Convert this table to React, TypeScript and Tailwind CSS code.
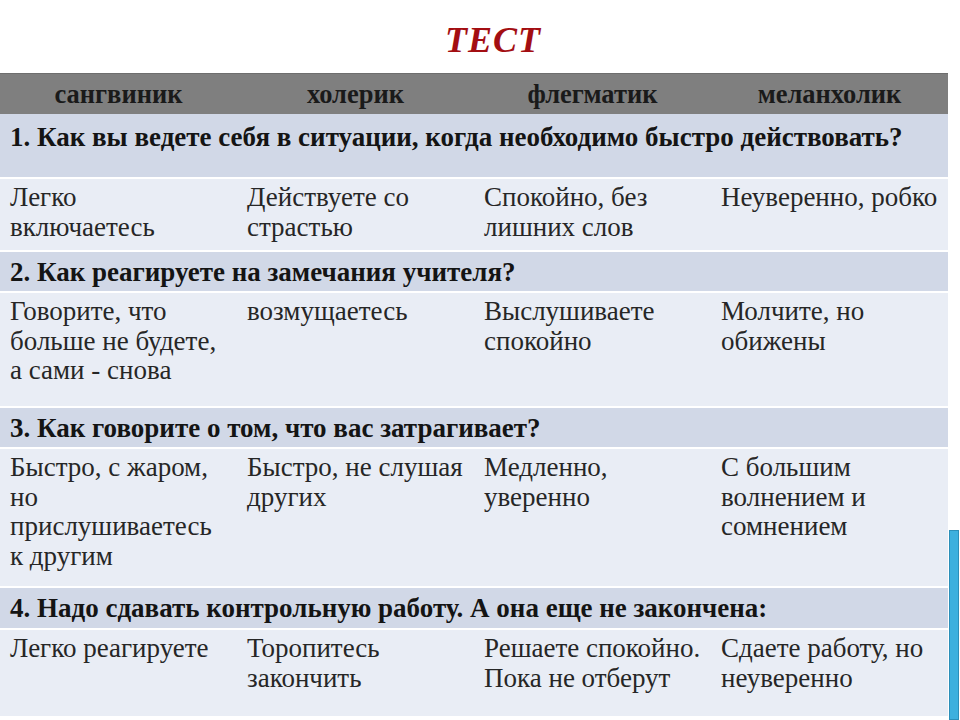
const serif = { fontFamily: '"Liberation Serif", "Times New Roman", serif' };

const columns = ["сангвиник", "холерик", "флегматик", "меланхолик"];

type Block = {
  question: string;
  qHeight: string;
  aHeight: string;
  answers: string[];
};

const blocks: Block[] = [
  {
    question: "1. Как вы ведете себя в ситуации, когда необходимо быстро действовать?",
    qHeight: "h-[63px]",
    aHeight: "h-[73px]",
    answers: ["Легко включаетесь", "Действуете со страстью", "Спокойно, без лишних слов", "Неуверенно, робко"],
  },
  {
    question: "2. Как реагируете на замечания учителя?",
    qHeight: "h-[41px]",
    aHeight: "h-[115px]",
    answers: ["Говорите, что больше не будете, а сами - снова", "возмущаетесь", "Выслушиваете спокойно", "Молчите, но обижены"],
  },
  {
    question: "3. Как говорите о том, что вас затрагивает?",
    qHeight: "h-[41px]",
    aHeight: "h-[139px]",
    answers: ["Быстро, с жаром, но прислушиваетесь к другим", "Быстро, не слушая других", "Медленно, уверенно", "С большим волнением и сомнением"],
  },
  {
    question: "4. Надо сдавать контрольную работу. А она еще не закончена:",
    qHeight: "h-[42px]",
    aHeight: "h-[88px]",
    answers: ["Легко реагируете", "Торопитесь закончить", "Решаете спокойно. Пока не отберут", "Сдаете работу, но неуверенно"],
  },
];

export default function App() {
  return (
    <div className="flex h-[720px] w-[960px] overflow-hidden bg-white text-[#1c1c1c]" style={serif}>
      <div className="flex w-[948px] flex-col">
        {/* Title */}
        <div className="flex h-[73px] items-center justify-center pl-[38px] pt-[6px]">
          <h1 className="text-[36px] font-bold italic leading-none tracking-[1px] text-[#a30e12]">ТЕСТ</h1>
        </div>

        {/* Header */}
        <div className="grid h-[41px] grid-cols-4 border-t border-[#6e6e6e] bg-[#7f7f7f]">
          {columns.map((c) => (
            <div key={c} className="flex items-center justify-center text-[26.5px] font-bold leading-none text-[#1a1a1a]">
              {c}
            </div>
          ))}
        </div>

        {blocks.map((b, i) => (
          <div key={i} className="flex flex-col">
            <div
              className={`${b.qHeight} bg-[#d1d8e7] pl-[10px] text-[27px] font-bold leading-[40px] text-[#141414] ${
                i === 0 ? "pt-[3px]" : "border-t-2 border-white"
              }`}
            >
              {b.question}
            </div>
            <div className={`${b.aHeight} grid grid-cols-4 border-t-2 border-white bg-[#e9edf5] pt-[4px]`}>
              {b.answers.map((a, j) => (
                <div key={j} className="pl-[10px] pr-[10px] text-[27px] leading-[29.5px] text-[#262626]">
                  {a}
                </div>
              ))}
            </div>
          </div>
        ))}
      </div>

      {/* Decorative bar on the right edge */}
      <div className="flex flex-1 flex-col justify-end pl-[1px]">
        <div className="h-[190px] w-[10px] border border-[#2b8fb9] bg-[#3cb0de]" />
      </div>
    </div>
  );
}
